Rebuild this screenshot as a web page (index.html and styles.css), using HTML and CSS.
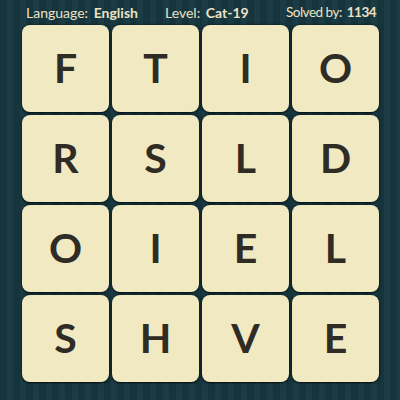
FILE: index.html
```html
<!DOCTYPE html>
<html>
<head>
<meta charset="utf-8">
<link rel="stylesheet" href="styles.css">
</head>
<body>
<div class="page">
  <header class="info">
    <span class="item lang">Language: <b>English</b></span>
    <span class="item level">Level: <b>Cat-19</b></span>
    <span class="item solved">Solved by: <b>1134</b></span>
  </header>
  <main class="board">
    <div class="tile">F</div><div class="tile">T</div><div class="tile">I</div><div class="tile">O</div>
    <div class="tile">R</div><div class="tile">S</div><div class="tile">L</div><div class="tile">D</div>
    <div class="tile">O</div><div class="tile">I</div><div class="tile">E</div><div class="tile">L</div>
    <div class="tile">S</div><div class="tile">H</div><div class="tile">V</div><div class="tile">E</div>
  </main>
</div>
</body>
</html>
```
FILE: styles.css
```css
html, body {
  margin: 0;
  padding: 0;
}
body {
  width: 400px;
  height: 400px;
  overflow: hidden;
  background-color: #173740;
  background-image: repeating-linear-gradient(90deg,
    #16343c 0px, #16343c 7px,
    #1b3c45 7px, #1b3c45 13px);
  font-family: "Lato", "Open Sans", sans-serif;
}
.page {
  display: flex;
  flex-direction: column;
  align-items: center;
}
.info {
  height: 25px;
  display: flex;
  align-items: center;
  padding: 0 0 1px 26px;
  box-sizing: border-box;
  width: 400px;
  color: #ebe3c4;
  font-size: 14px;
  white-space: nowrap;
}
.lang { width: 139px; flex: none; }
.level { width: 121px; flex: none; }
.solved { flex: none; font-size: 13.5px; letter-spacing: -0.5px; }
.info b {
  font-weight: 700;
  margin-left: 2px;
}
.board {
  display: grid;
  grid-template-columns: repeat(4, 87px);
  grid-template-rows: repeat(4, 87px);
  gap: 3px;
  margin-left: 1px;
}
.tile {
  background: #f1e9c2;
  border-radius: 8px;
  box-shadow: 0 1px 2px rgba(0, 0, 0, 0.6), 0 0 3px rgba(5, 20, 24, 0.8);
  display: flex;
  align-items: center;
  justify-content: center;
  color: #2f2b25;
  font-size: 41px;
  font-weight: 700;
  line-height: 1;
  padding-bottom: 2px;
  box-sizing: border-box;
}
```
